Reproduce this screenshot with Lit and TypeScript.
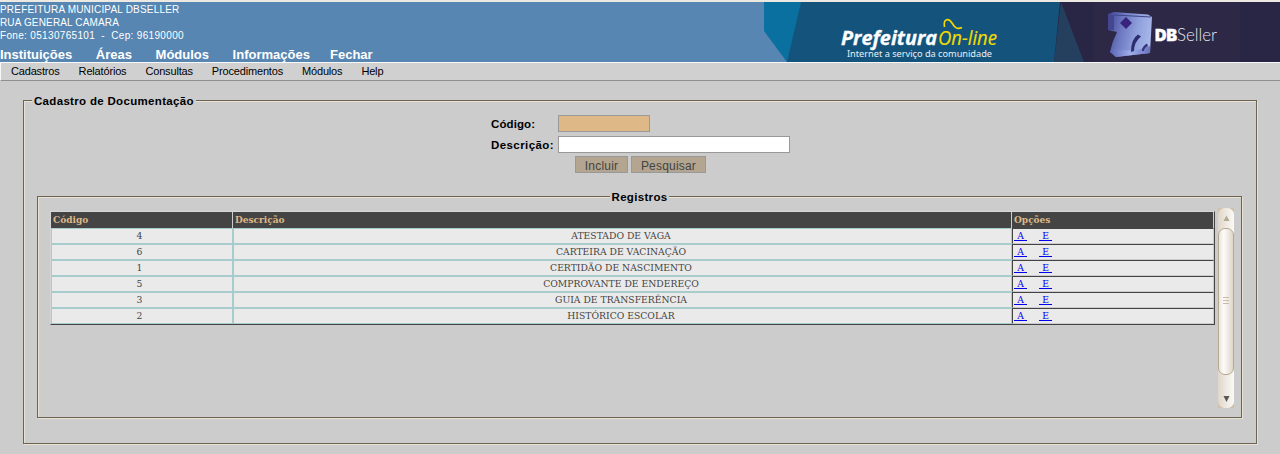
import { LitElement, html, css } from "lit";
import { customElement } from "lit/decorators.js";

const rows: [number, string][] = [
  [4, "ATESTADO DE VAGA"],
  [6, "CARTEIRA DE VACINAÇÃO"],
  [1, "CERTIDÃO DE NASCIMENTO"],
  [5, "COMPROVANTE DE ENDEREÇO"],
  [3, "GUIA DE TRANSFERÊNCIA"],
  [2, "HISTÓRICO ESCOLAR"],
];

@customElement("top-banner")
class TopBanner extends LitElement {
  static styles = css`
    :host { display: block; width: 516px; height: 60px; }
    svg { display: block; }
    .title { font: italic 700 20px "Open Sans", sans-serif; fill: #fff; stroke: #fff; stroke-width: .3px; }
    .online { font: italic 400 20px "Open Sans", sans-serif; fill: #f2dc00; stroke: #f2dc00; stroke-width: .2px; }
    .tag { font: 400 9.5px "Noto Sans", sans-serif; fill: #e8f0f5; }
    .db { font: 900 16.5px Inter, sans-serif; fill: #fff; stroke: #fff; stroke-width: .5px; }
    .seller { font: 300 17px Lato, sans-serif; fill: #e8e6f0; }
  `;
  render() {
    return html`<svg width="516" height="60" viewBox="764 2 516 60">
      <defs>
        <linearGradient id="cube" x1="0" y1=".3" x2="1" y2=".5">
          <stop offset="0" stop-color="#484d9c" />
          <stop offset=".3" stop-color="#6c78c0" />
          <stop offset=".65" stop-color="#8f9fdc" />
          <stop offset="1" stop-color="#a9b8ea" />
        </linearGradient>
        <linearGradient id="foot" x1="0" y1="0" x2="1" y2="0">
          <stop offset="0" stop-color="#5a62b4" />
          <stop offset=".5" stop-color="#a3b2ee" />
          <stop offset="1" stop-color="#5a62b8" />
        </linearGradient>
      </defs>
      <rect x="764" y="2" width="516" height="60" fill="#14547c" />
      <path d="M764 2H801L787 62L764 32Z" fill="#0a70a0" />
      <path d="M764 31L787 62H764Z" fill="#5786b2" />
      <path d="M1060 2H1280V62H1054Z" fill="#282545" />
      <path d="M1094 2H1240V62H1094Z" fill="#2c2845" />
      <path d="M1061 2L1084 62H1054Z" fill="#24405e" />
      <path d="M1108 14L1114 12L1148 14.500L1152 17L1150 53L1116 57L1110 52Q1112 42 1117 32L1108 30Z" fill="url(#cube)" />
      <path d="M1108 14L1114 15V30L1108 30Z" fill="#44478f" />
      <path d="M1114 15L1151 17" stroke="#3f4488" stroke-width="1" fill="none" />
      <path d="M1112 48Q1130 54 1150 46V53L1116 57L1110 52Z" fill="url(#foot)" opacity=".8" />
      <path d="M1120 23L1126 17L1132 23L1126 29Z" fill="#39247d" />
      <path d="M1131 52Q1131 39 1138 34.500L1141 36.500Q1134 42 1134 51Z" fill="#2b2d70" />
      <path d="M1142 51Q1142 46 1147 43.500L1148 46Q1144 48 1144 51Z" fill="#34347c" />
      <text class="title" x="841" y="45" textLength="96" lengthAdjust="spacingAndGlyphs">Prefeitura</text>
      <text class="online" x="938" y="45" textLength="59" lengthAdjust="spacingAndGlyphs">On-line</text>
      <path d="M944.500 27C943 18 949 18 952 23S957 29.500 962 27.500" fill="none" stroke="#f2dc00" stroke-width="1.600" />
      <text class="tag" x="847" y="56.500" textLength="145" lengthAdjust="spacingAndGlyphs">Internet a serviço da comunidade</text>
      <text class="db" x="1155" y="41" textLength="22" lengthAdjust="spacingAndGlyphs">DB</text>
      <text class="seller" x="1177" y="41" textLength="40" lengthAdjust="spacingAndGlyphs">Seller</text>
    </svg>`;
  }
}

@customElement("scroll-track")
class ScrollTrack extends LitElement {
  static styles = css`
    :host { display: block; width: 16px; height: 200px; }
    svg { display: block; }
  `;
  render() {
    return html`<svg width="16" height="200">
      <defs>
        <linearGradient id="t"><stop stop-color="#e0d6ca" /><stop offset="1" stop-color="#fbfaf7" /></linearGradient>
        <linearGradient id="h"><stop stop-color="#e8e2d8" /><stop offset=".35" stop-color="#fdfcfa" /><stop offset="1" stop-color="#dcd3c5" /></linearGradient>
      </defs>
      <rect width="16" height="200" fill="#cfc0a8" />
      <rect width="16" height="200" rx="6.500" fill="url(#t)" />
      <path d="M5.500 13L8.500 7.500L11.500 13Z" fill="#b5a993" />
      <rect x=".5" y="20.500" width="15" height="146" rx="6.500" fill="url(#h)" stroke="#b5a88e" />
      <path d="M5 89.500H11M5 92.500H11M5 95.500H11" stroke="#c5bbaa" />
      <path d="M5.500 188H11.500L8.500 194Z" fill="#5a5850" />
    </svg>`;
  }
}

@customElement("app-root")
class AppRoot extends LitElement {
  static styles = css`
    :host { display: block; height: 454px; overflow: hidden; background: #ccc; box-sizing: border-box;
      border-top: 2px solid #ece8e2; font-family: "Liberation Sans", Arial, sans-serif; color: #000; }
    * { box-sizing: border-box; }
    .header { height: 60px; background: #5786b2; display: flex; justify-content: space-between; color: #fff; }
    .info { font-size: 10px; line-height: 13px; letter-spacing: .19px; white-space: pre; padding-top: 1px; }
    .info div:nth-child(2) { letter-spacing: .15px; }
    .info div:nth-child(3) { letter-spacing: .33px; }
    .nav { display: flex; gap: 23.6px; font-size: 13px; font-weight: 700; line-height: 15px; padding-top: 5px; white-space: nowrap; }
    .nav span:nth-child(4) { margin-right: -3.5px; }
    .menu { height: 19px; border-top: 1px solid #f8f8f8; border-bottom: 1px solid #909090; border-left: 1px solid #f8f8f8;
      background: #d0d0d0; display: flex; gap: 19px; padding-left: 10px; font-size: 11px; line-height: 17px; letter-spacing: -.17px; }
    .outer, .inner { border: 1px solid #6b6354; box-shadow: inset 1px 1px #e9e2d3, 1px 1px #e9e2d3; }
    .outer { height: 344px; width: 1234px; margin: 19px 0 0 23px; }
    .inner { height: 222px; width: 1205px; margin: 23px 0 0 13px; }
    .legend { display: block; background: #ccc; width: max-content; font-size: 11.5px; font-weight: 700; line-height: 15px; height: 14px;
      padding: 0 2px; margin-top: -7px; letter-spacing: .32px; }
    .outer > .legend { margin-left: 8px; }
    .inner > .legend { margin-left: auto; margin-right: auto; }
    .form { display: grid; grid-template-columns: 67px 232px; row-gap: 4px; width: 299px; margin: 7px 0 0 467px; }
    .label { font-size: 11.5px; font-weight: 700; line-height: 19px; height: 17px; white-space: nowrap; letter-spacing: .42px; }
    .label:first-child { letter-spacing: .1px; }
    .field { height: 17px; border: 1px solid #999; background: #fff; }
    .code { width: 92px; background: #deb887; }
    .buttons { display: flex; gap: 3px; margin: 3px 0 0 551px; }
    .button { height: 17px; width: 53px; border: 1px solid #999; background: #b3a58f; color: #444; font-size: 12px; line-height: 18px;
      text-align: center; letter-spacing: .2px; }
    .wide { width: 75px; }
    .content { display: flex; align-items: flex-start; gap: 3px; padding-left: 12px; margin-top: 4px; }
    .table { width: 1165px; margin-top: 3px; border: 1px solid; border-color: #d6d6d6 #444 #444 #d6d6d6; font-family: "DejaVu Serif", serif;
      font-size: 9.240px; line-height: 14px; }
    .row { display: grid; grid-template-columns: 182px 779px 202px; height: 16px; }
    .head { background: #444; border-right: 1px solid #ccc; border-bottom: 1px solid #ccc; color: #deb887; font-size: 9px; font-weight: 700; padding-left: 2px; line-height: 16px; }
    .cell { background: #eaeaea; border: 1px solid #a8cccc; color: #444; text-align: center; padding-right: 3px; }
    .left { padding-right: 5px; }
    .options { background: #eaeaea; border: 1px solid; border-color: #444 #ccc #ccc #444; display: flex; gap: 12px; padding-left: 1px; }
    .link { color: #00e; width: 13px; height: 13px; line-height: 15px; text-align: center; border-bottom: 1px solid #00e; margin-top: -1px; }
  `;
  render() {
    return html`
      <header class="header">
        <div>
          <div class="info"><div>PREFEITURA MUNICIPAL DBSELLER</div><div>RUA GENERAL CAMARA</div><div>Fone: 05130765101  -  Cep: 96190000</div></div>
          <nav class="nav">${["Instituições", "Áreas", "Módulos", "Informações", "Fechar"].map((t) => html`<span>${t}</span>`)}</nav>
        </div>
        <top-banner></top-banner>
      </header>
      <nav class="menu">${["Cadastros", "Relatórios", "Consultas", "Procedimentos", "Módulos", "Help"].map((t) => html`<span>${t}</span>`)}</nav>
      <section class="outer">
        <span class="legend">Cadastro de Documentação</span>
        <div class="form">
          <span class="label">Código:</span><div class="field code"></div>
          <span class="label">Descrição:</span><div class="field"></div>
        </div>
        <div class="buttons"><div class="button">Incluir</div><div class="button wide">Pesquisar</div></div>
        <section class="inner">
          <span class="legend">Registros</span>
          <div class="content">
            <div class="table">
              <div class="row">${["Código", "Descrição", "Opções"].map((t) => html`<div class="head">${t}</div>`)}</div>
              ${rows.map(([id, name]) => html`<div class="row">
                <div class="cell left">${id}</div><div class="cell">${name}</div>
                <div class="options"><span class="link">A</span><span class="link">E</span></div>
              </div>`)}
            </div>
            <scroll-track></scroll-track>
          </div>
        </section>
      </section>`;
  }
}
